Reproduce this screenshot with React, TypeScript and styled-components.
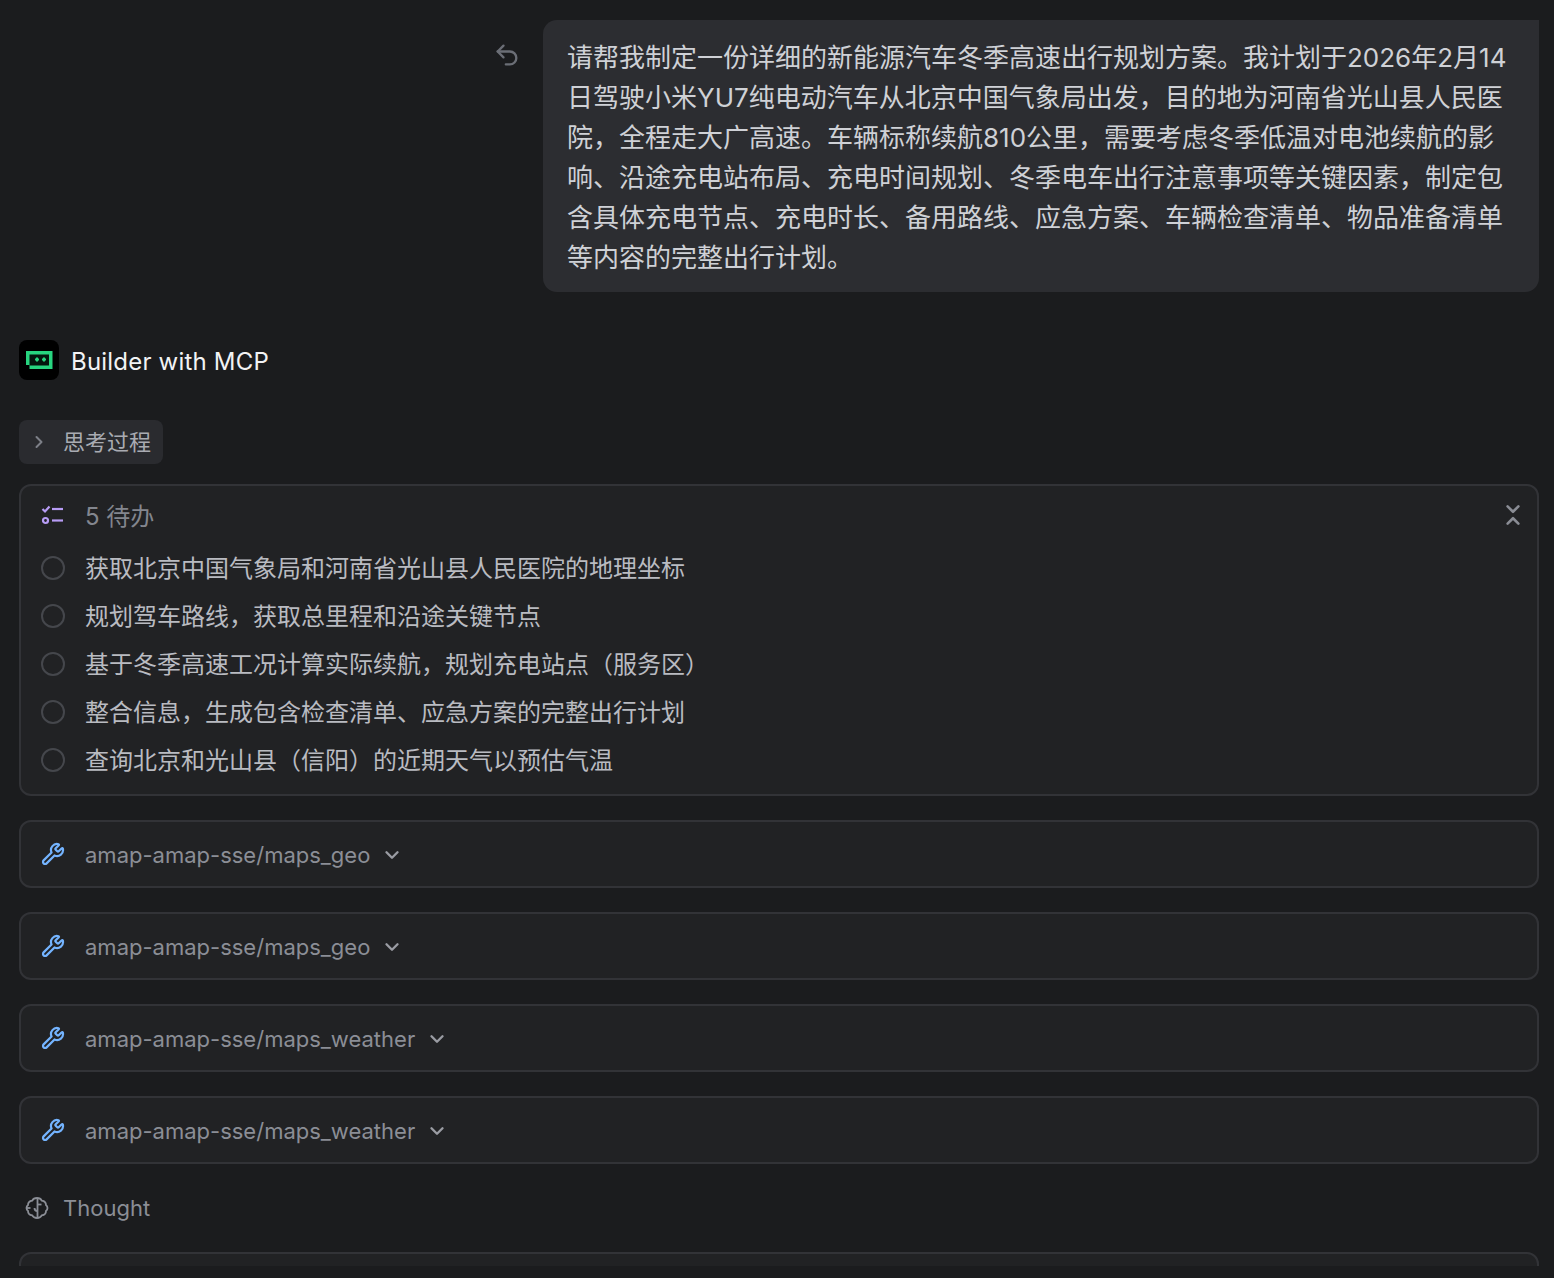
import React from 'react';
import styled, { createGlobalStyle } from 'styled-components';
import { ChevronDown, ChevronRight, ChevronsDownUp, Undo2, Wrench } from 'lucide-react';

const GlobalStyle = createGlobalStyle`
    html, body {
        margin: 0;
        background: #1b1c1e;
    }
    * {
        box-sizing: border-box;
    }
`

const Page = styled.div`
    height: 1266px;
    overflow: hidden;
    padding: 20px 15px 0 19px;
    display: flex;
    flex-direction: column;
    background: #1b1c1e;
    font-family: Inter, "Noto Sans CJK SC", sans-serif;
    & > * {
        flex-shrink: 0;
    }
`

const UserRow = styled.div`
    display: flex;
    justify-content: flex-end;
    align-items: flex-start;
    gap: 22px;
`

const UndoButton = styled.div`
    color: #6b6e76;
    display: flex;
    margin-top: 21px;
`

const Bubble = styled.div`
    width: 996px;
    height: 272px;
    padding: 18px 25px 0 24px;
    background: #2c2d31;
    border-radius: 14px 0 14px 14px;
    color: #cfd1d6;
    font-size: 26px;
    line-height: 40px;
`

const AgentRow = styled.div`
    display: flex;
    align-items: center;
    gap: 12px;
    margin-top: 48px;
    color: #f2f3f5;
    font-size: 24px;
    height: 40px;
    letter-spacing: 0.2px;
`

const AgentName = styled.span`
    padding-top: 2px;
`

const Logo = styled.div`
    width: 40px;
    height: 40px;
    border-radius: 8px;
    background: #000;
    display: flex;
    align-items: center;
    justify-content: center;
`

const ThinkingButton = styled.div`
    align-self: flex-start;
    display: flex;
    align-items: center;
    height: 44px;
    margin-top: 40px;
    padding: 0 12px 0 10px;
    gap: 14px;
    border-radius: 8px;
    background: #2a2b2f;
    color: #a9abb2;
    font-size: 22px;
`

const ThinkingLabel = styled.span`
    padding-bottom: 4px;
`

const Card = styled.div`
    border: 2px solid #323337;
    border-radius: 12px;
    background: #212224;
`

const TodoCard = styled(Card)`
    margin-top: 20px;
    height: 312px;
    padding: 0 11px 0 20px;
`

const TodoHeader = styled.div`
    display: flex;
    align-items: center;
    height: 57px;
    gap: 20px;
    color: #83868e;
    font-size: 24px;
`

const HeaderLabel = styled.span`
    flex: 1;
`

const CollapseIcon = styled.div`
    display: flex;
    color: #8a8d95;
`

const TodoRow = styled.div`
    display: flex;
    align-items: center;
    height: 48px;
    gap: 20px;
    color: #b9bbc1;
    font-size: 24px;
`

const TodoText = styled.span`
    padding-bottom: 2px;
`

const Radio = styled.span`
    width: 24px;
    height: 24px;
    margin-top: 2px;
    border: 2px solid #45474c;
    border-radius: 50%;
`

const ToolCard = styled(Card)`
    display: flex;
    align-items: center;
    height: 68px;
    margin-top: 24px;
    padding: 0 20px;
    gap: 20px;
    color: #8b8e96;
    font-size: 22px;
`

const ToolIcon = styled.div`
    display: flex;
    color: #74b4ff;
`

const ToolName = styled.div`
    display: flex;
    align-items: center;
    gap: 11px;
    line-height: 30px;
    padding-top: 2px;
`

const ThoughtRow = styled.div`
    display: flex;
    align-items: center;
    height: 32px;
    margin-top: 28px;
    padding-left: 6px;
    gap: 14px;
    color: #8b8e96;
    font-size: 22px;
`

const LastCard = styled(Card)`
    height: 80px;
    margin-top: 28px;
`

const todos = [
    '获取北京中国气象局和河南省光山县人民医院的地理坐标',
    '规划驾车路线，获取总里程和沿途关键节点',
    '基于冬季高速工况计算实际续航，规划充电站点（服务区）',
    '整合信息，生成包含检查清单、应急方案的完整出行计划',
    '查询北京和光山县（信阳）的近期天气以预估气温',
];

const tools = ['maps_geo', 'maps_geo', 'maps_weather', 'maps_weather'];

function LogoMark() {
    return (
        <svg width="28" height="20" viewBox="0 0 28 20" fill="none">
            <path d="M1 1h26.500v18H4.500v-4H1z" fill="#27d47f" />
            <path d="M4.500 4.500h19.500v11H4.500z" fill="#04150d" />
            <path d="M10 8.500h1v-1h2v1h1v2h-1v1h-2v-1h-1zM17 8.500h1v-1h2v1h1v2h-1v1h-2v-1h-1z" fill="#27d47f" />
        </svg>
    );
}

function TodoIcon() {
    return (
        <svg width="24" height="24" viewBox="0 0 24 24" fill="none" stroke="#b79cf5" strokeWidth="2.200">
            <path d="M1.500 6l2.500 2.500L8.500 3.500" />
            <path d="M11 6h11" />
            <path d="M11 17.500h11" />
            <circle cx="4.500" cy="17.500" r="2.500" />
        </svg>
    );
}

function BrainIcon() {
    return (
        <svg width="24" height="24" viewBox="0 0 24 24" fill="none" stroke="#8b8e96" strokeWidth="1.800">
            <path d="M12 2c-2.500 0-4 1-4.800 2.600C4.500 5 3 6.800 3 9c-1 .8-1.500 1.800-1.500 3s.5 2.200 1.500 3c0 2.200 1.500 4 4.200 4.400C8 21 9.500 22 12 22s4-1 4.800-2.600c2.700-.4 4.200-2.200 4.200-4.400 1-.8 1.500-1.800 1.500-3s-.5-2.200-1.500-3c0-2.200-1.500-4-4.200-4.400C16 3 14.500 2 12 2z" />
            <path d="M12.500 2v20" />
            <path d="M12.500 8.500h4" />
            <path d="M12.500 15c-2 0-3-1-3-3" />
            <path d="M2 12h3.500" />
        </svg>
    );
}

function App() {
    return (
        <Page>
            <GlobalStyle />
            <UserRow>
                <UndoButton>
                    <Undo2 size={28} strokeWidth={2} />
                </UndoButton>
                <Bubble>
                    请帮我制定一份详细的新能源汽车冬季高速出行规划方案。我计划于2026年2月14日驾驶小米YU7纯电动汽车从北京中国气象局出发，目的地为河南省光山县人民医院，全程走大广高速。车辆标称续航810公里，需要考虑冬季低温对电池续航的影响、沿途充电站布局、充电时间规划、冬季电车出行注意事项等关键因素，制定包含具体充电节点、充电时长、备用路线、应急方案、车辆检查清单、物品准备清单等内容的完整出行计划。
                </Bubble>
            </UserRow>

            <AgentRow>
                <Logo>
                    <LogoMark />
                </Logo>
                <AgentName>Builder with MCP</AgentName>
            </AgentRow>

            <ThinkingButton>
                <ChevronRight size={20} strokeWidth={2.400} color="#7d8088" />
                <ThinkingLabel>思考过程</ThinkingLabel>
            </ThinkingButton>

            <TodoCard>
                <TodoHeader>
                    <TodoIcon />
                    <HeaderLabel>5 待办</HeaderLabel>
                    <CollapseIcon>
                        <ChevronsDownUp size={26} strokeWidth={2.400} />
                    </CollapseIcon>
                </TodoHeader>
                {todos.map(todo => (
                    <TodoRow key={todo}>
                        <Radio />
                        <TodoText>{todo}</TodoText>
                    </TodoRow>
                ))}
            </TodoCard>

            {tools.map((tool, i) => (
                <ToolCard key={i}>
                    <ToolIcon>
                        <Wrench size={24} strokeWidth={2.200} />
                    </ToolIcon>
                    <ToolName>
                        amap-amap-sse/{tool}
                        <ChevronDown size={22} strokeWidth={2.600} color="#9a9ca3" />
                    </ToolName>
                </ToolCard>
            ))}

            <ThoughtRow>
                <BrainIcon />
                Thought
            </ThoughtRow>

            <LastCard />
        </Page>
    );
}

export default App;
